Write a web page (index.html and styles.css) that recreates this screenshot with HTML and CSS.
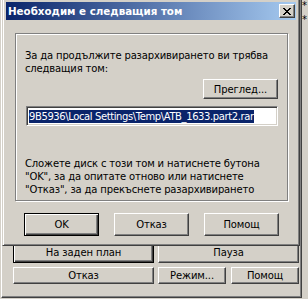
FILE: index.html
```html
<!DOCTYPE html>
<html lang="bg">
<head>
    <meta charset="UTF-8">
    <title>Необходим е следващия том</title>
    <link rel="stylesheet" href="styles.css">
</head>
<body>
    <div class="desk">
        <div class="behind">
            <span>*</span>
            <span>*</span>
        </div>

        <div class="parent">
            <div class="parent-buttons">
                <div class="prow">
                    <button class="btn pbtn default">На заден план</button>
                    <button class="btn pbtn">Пауза</button>
                </div>
                <div class="prow low">
                    <button class="btn pbtn">Отказ</button>
                    <button class="btn pbtn mode">Режим...</button>
                    <button class="btn pbtn help">Помощ</button>
                </div>
            </div>
        </div>

        <div class="dialog">
            <div class="titlebar">
                <span class="title">Необходим е следващия том</span>
                <span class="close">
                    <svg width="8" height="7" viewBox="0 0 8 7" shape-rendering="crispEdges">
                        <path d="M0 0h2v1h-2zM6 0h2v1h-2zM1 1h2v1h-2zM5 1h2v1h-2zM2 2h4v1h-4zM3 3h2v1h-2zM2 4h4v1h-4zM1 5h2v1h-2zM5 5h2v1h-2zM0 6h2v1h-2zM6 6h2v1h-2z" fill="#000"/>
                    </svg>
                </span>
            </div>

            <div class="client">
                <div class="group">
                    <p class="label">За да продължите разархивирането ви трябва<br>следващия том:</p>
                    <div class="browse-row">
                        <button class="btn browse">Преглед...</button>
                    </div>
                    <div class="edit">
                        <span class="selected">9B5936\Local Settings\Temp\ATB_1633.part2.rar</span>
                    </div>
                    <p class="hint">Сложете диск с този том и натиснете бутона<br>"OK", за да опитате отново или натиснете<br>"Отказ", за да прекъснете разархивирането</p>
                </div>

                <div class="actions">
                    <button class="btn act default">OK</button>
                    <button class="btn act">Отказ</button>
                    <button class="btn act">Помощ</button>
                </div>
            </div>
        </div>
    </div>
</body>
</html>
```

FILE: styles.css
```css
body {
    margin: 0;
    background: #d4d0c8;
    font-family: 'DejaVu Sans', sans-serif;
    font-size: 10px;
    color: #000000;
    overflow: hidden;
}

.desk {
    position: relative;
    width: 308px;
    height: 299px;
    background: #d4d0c8;
    overflow: hidden;
}

/* window further behind, only a strip shows on the right */
.behind {
    position: absolute;
    top: 0;
    left: 302px;
    width: 6px;
    display: flex;
    flex-direction: column;
    line-height: 14px;
    font-size: 10px;
    margin-top: -1px;
}

/* progress window under the dialog */
.parent {
    position: absolute;
    left: 1px;
    top: 0;
    width: 301px;
    height: 298px;
    box-sizing: border-box;
    border-left: 1px solid #ffffff;
    border-right: 1px solid #404040;
    border-bottom: 1px solid #404040;
    box-shadow: inset -1px -1px #808080;
    display: flex;
    flex-direction: column;
    justify-content: flex-end;
}

.parent-buttons {
    padding: 0 2px 13px 11px;
    display: flex;
    flex-direction: column;
    gap: 4px;
}

.prow {
    display: flex;
    gap: 4px;
    height: 22px;
}

.prow.low {
    height: 17px;
}

.btn {
    font-family: 'DejaVu Sans', sans-serif;
    font-size: 10px;
    letter-spacing: -0.1px;
    color: #000000;
    background: #d4d0c8;
    border: 1px solid;
    border-color: #ffffff #404040 #404040 #ffffff;
    box-shadow: inset -1px -1px #808080;
    padding: 0;
    margin: 0;
    box-sizing: border-box;
    display: flex;
    align-items: center;
    justify-content: center;
}

.btn.default {
    border: 1px solid #000000;
    box-shadow: inset 1px 1px #ffffff, inset -1px -1px #404040, inset -2px -2px #808080;
}

.pbtn {
    width: 141px;
    height: 100%;
}

.pbtn.mode {
    width: 68px;
}

.pbtn.help {
    width: 68px;
    margin-left: 1px;
}

.dialog {
    position: absolute;
    left: 2px;
    top: -2px;
    width: 298px;
    height: 248px;
    box-sizing: border-box;
    background: #d4d0c8;
    border: 1px solid;
    border-color: #d4d0c8 #404040 #404040 #d4d0c8;
    box-shadow: inset 1px 1px #ffffff, inset -1px -1px #808080;
    padding: 3px;
    display: flex;
    flex-direction: column;
}

.titlebar {
    height: 18px;
    flex-shrink: 0;
    background: linear-gradient(to right, #0a246a, #a6caf0);
    display: flex;
    align-items: center;
    justify-content: space-between;
    padding: 0 1px 0 2px;
}

.title {
    color: #ffffff;
    font-weight: bold;
    font-size: 10.3px;
    white-space: nowrap;
}

.close {
    width: 16px;
    height: 14px;
    box-sizing: border-box;
    background: #d4d0c8;
    border: 1px solid;
    border-color: #ffffff #404040 #404040 #ffffff;
    box-shadow: inset -1px -1px #808080;
    display: flex;
    align-items: center;
    justify-content: center;
}

.client {
    padding: 13px 8px 0 9px;
    display: flex;
    flex-direction: column;
}

.group {
    height: 168px;
    box-sizing: border-box;
    border: 1px solid #808080;
    box-shadow: inset 1px 1px #ffffff, 1px 1px #ffffff;
    padding: 15px 9px 0 10px;
    display: flex;
    flex-direction: column;
}

.label,
.hint {
    margin: 0 0 0 -1px;
    line-height: 13px;
    letter-spacing: -0.15px;
    white-space: nowrap;
}

.browse-row {
    display: flex;
    justify-content: flex-end;
    margin-top: 4px;
}

.browse {
    width: 75px;
    height: 20px;
}

.edit {
    margin-top: 7px;
    height: 20px;
    box-sizing: border-box;
    background: #ffffff;
    border: 1px solid;
    border-color: #808080 #ffffff #ffffff #808080;
    box-shadow: inset 1px 1px #404040, inset -1px -1px #d4d0c8;
    padding: 0 0 0 2px;
    display: flex;
    align-items: center;
    overflow: hidden;
}

.selected {
    background: #0a246a;
    color: #ffffff;
    line-height: 13px;
    letter-spacing: -0.4px;
    white-space: nowrap;
}

.hint {
    margin-top: 31px;
}

.actions {
    display: flex;
    gap: 15px;
    margin-top: 12px;
    padding-left: 9px;
}

.act {
    width: 75px;
    height: 23px;
}
```
